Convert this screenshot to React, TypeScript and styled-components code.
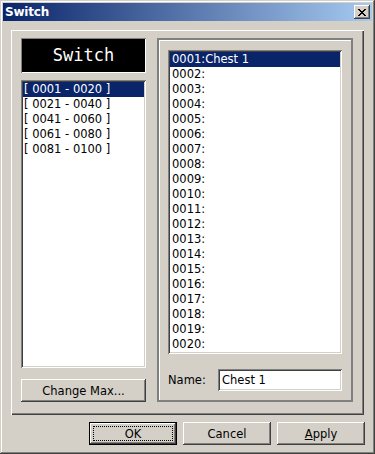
import React from "react";
import styled, { createGlobalStyle, css } from "styled-components";

const face = "#D4D0C8";
const navy = "#0A246A";

const GlobalStyle = createGlobalStyle`
  * { box-sizing: border-box; }
  html, body { margin: 0; padding: 0; background: ${face}; }
  body { font-family: "DejaVu Sans", Verdana, sans-serif; font-size: 11.5px; color: #000; }
`;

const raised = css`
  box-shadow: inset -1px -1px #404040, inset 1px 1px #ffffff,
    inset -2px -2px #808080, inset 2px 2px ${face};
`;

const sunken = css`
  box-shadow: inset 1px 1px #808080, inset -1px -1px #ffffff,
    inset 2px 2px #404040, inset -2px -2px ${face};
`;

const Window = styled.div`
  width: 375px;
  height: 454px;
  padding: 3px;
  background: ${face};
  display: flex;
  flex-direction: column;
  box-shadow: inset -1px -1px #404040, inset 1px 1px ${face},
    inset -2px -2px #808080, inset 2px 2px #ffffff;
`;

const TitleBar = styled.div`
  height: 18px;
  display: flex;
  align-items: center;
  justify-content: space-between;
  padding: 0 2px 0 2px;
  background: linear-gradient(to right, ${navy}, #a6caf0);
`;

const Title = styled.span`
  color: #fff;
  font-weight: bold;
  font-size: 12px;
  letter-spacing: -0.2px;
`;

const CloseButton = styled.div`
  width: 16px;
  height: 14px;
  background: ${face};
  display: flex;
  align-items: center;
  justify-content: center;
  ${raised}
`;

const Group = styled.div`
  margin: 9px 8px 0 8px;
  height: 385px;
  padding: 8px 11px 13px 10px;
  display: flex;
  gap: 11px;
  box-shadow: inset 1px 1px #ffffff, inset -1px -1px #404040,
    inset -2px -2px #808080;
`;

const LeftColumn = styled.div`
  width: 125px;
  display: flex;
  flex-direction: column;
`;

const Header = styled.div`
  height: 35px;
  background: #000;
  color: #fff;
  font-family: "DejaVu Sans Mono", monospace;
  font-size: 17px;
  display: flex;
  align-items: center;
  justify-content: center;
  box-shadow: inset 1px 1px #808080, inset -1px -1px #ffffff;
`;

const ListBox = styled.div<{ $height: number; $pad: number }>`
  height: ${(p) => p.$height}px;
  background: #fff;
  padding: 2px 2px;
  ${sunken}
  div {
    padding-left: ${(p) => p.$pad}px;
  }
`;

const Row = styled.div<{ $selected?: boolean }>`
  height: 15px;
  line-height: 15px;
  white-space: nowrap;
  color: ${(p) => (p.$selected ? "#fff" : "#000")};
  background: ${(p) => (p.$selected ? navy : "transparent")};
`;

const Button = styled.div<{ $default?: boolean; $width?: number }>`
  position: relative;
  width: ${(p) => p.$width ?? 88}px;
  height: 23px;
  background: ${face};
  display: flex;
  align-items: center;
  justify-content: center;
  ${(p) =>
    p.$default
      ? css`
          box-shadow: inset 0 0 0 1px #000, inset -2px -2px #404040,
            inset 2px 2px #ffffff, inset -3px -3px #808080;
        `
      : raised}
`;

const FocusRing = styled.span`
  position: absolute;
  inset: 4px;
  border: 1px dotted #000;
`;

const RightPanel = styled.div`
  flex: 1;
  border: 2px solid #808080;
  padding: 10px 9px 0 9px;
  display: flex;
  flex-direction: column;
  box-shadow: inset 1px 1px #ffffff;
`;

const NameRow = styled.div`
  margin-top: 15px;
  display: flex;
  align-items: center;
  justify-content: space-between;
`;

const TextField = styled.div`
  width: 124px;
  height: 22px;
  background: #fff;
  padding: 0 4px;
  display: flex;
  align-items: center;
  ${sunken}
`;

const ButtonRow = styled.div`
  margin-top: 7px;
  padding-right: 7px;
  display: flex;
  justify-content: flex-end;
  gap: 6px;
`;

const ranges = ["0001 - 0020", "0021 - 0040", "0041 - 0060", "0061 - 0080", "0081 - 0100"];
const switches = Array.from({ length: 20 }, (_, i) => {
  const id = String(i + 1).padStart(4, "0");
  return `${id}:${i === 0 ? "Chest 1" : ""}`;
});

export default function App() {
  return (
    <>
      <GlobalStyle />
      <Window>
        <TitleBar>
          <Title>Switch</Title>
          <CloseButton>
            <svg width="8" height="7" viewBox="0 0 8 7" shapeRendering="crispEdges">
              <path d="M0 0h2v1H0zM6 0h2v1H6zM1 1h2v1H1zM5 1h2v1H5zM2 2h4v1H2zM3 3h2v1H3zM2 4h4v1H2zM1 5h2v1H1zM5 5h2v1H5zM0 6h2v1H0zM6 6h2v1H6z" fill="#000" />
            </svg>
          </CloseButton>
        </TitleBar>
        <Group>
          <LeftColumn>
            <Header>Switch</Header>
            <div style={{ height: 7 }} />
            <ListBox $height={289} $pad={1}>
              {ranges.map((r, i) => (
                <Row key={r} $selected={i === 0}>[ {r} ]</Row>
              ))}
            </ListBox>
            <div style={{ height: 11 }} />
            <Button $width={125}>Change Max...</Button>
          </LeftColumn>
          <RightPanel>
            <ListBox $height={304} $pad={2}>
              {switches.map((s, i) => (
                <Row key={s} $selected={i === 0}>{s}</Row>
              ))}
            </ListBox>
            <NameRow>
              <span>Name:</span>
              <TextField>Chest 1</TextField>
            </NameRow>
          </RightPanel>
        </Group>
        <ButtonRow>
          <Button $default>
            <FocusRing />
            OK
          </Button>
          <Button>Cancel</Button>
          <Button>
            <span><u>A</u>pply</span>
          </Button>
        </ButtonRow>
      </Window>
    </>
  );
}
